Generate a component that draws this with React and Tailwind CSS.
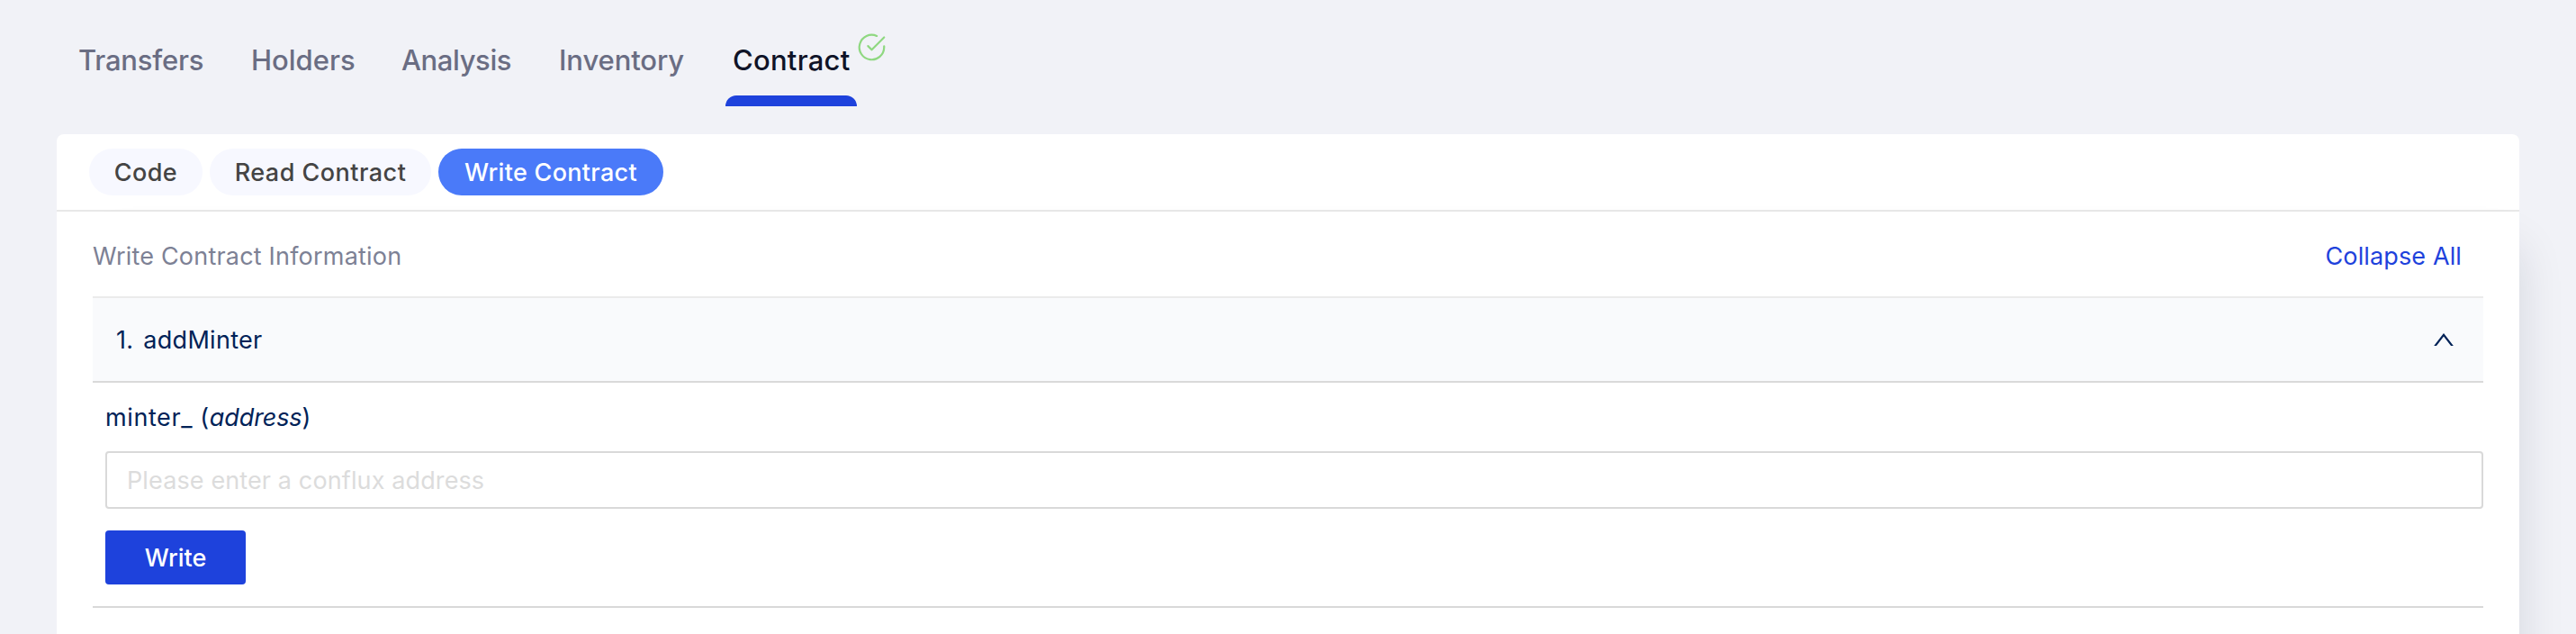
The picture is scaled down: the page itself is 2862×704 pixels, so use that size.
import React, { useState } from 'react';
import { FiCheckCircle } from 'react-icons/fi';
import clsx from 'clsx';

const tabs = [
    { name: 'Transfers', className: 'w-[156px] tracking-[-0.2px]' },
    { name: 'Holders', className: 'w-[131px]' },
    { name: 'Analysis', className: 'w-[139px] tracking-[-0.4px]' },
    { name: 'Inventory', className: 'w-[157px] tracking-[-0.1px]' },
    { name: 'Contract', className: 'w-[146px] tracking-[0.25px]', verified: true },
];

const views = [
    { name: 'Code', className: 'w-[126px] tracking-[0.4px]' },
    { name: 'Read Contract', className: 'w-[246px] tracking-[0.48px]' },
    { name: 'Write Contract', className: 'w-[250px] tracking-[0.3px]' },
];

const ChevronUp = ({ className }) => (
    <svg className={className} width="22" height="14" viewBox="0 0 22 14" fill="none">
        <polyline points="0.8,15 11,1.8 21.2,15" stroke="currentColor" strokeWidth="2.2" />
    </svg>
);

const App = () => {
    const [activeTab, setActiveTab] = useState('Contract');
    const [activeView, setActiveView] = useState('Write Contract');
    const [open, setOpen] = useState(true);

    return (
        <div className="h-[704px] overflow-hidden bg-[#f1f2f7] px-[63px] pt-[43px] font-['Inter',sans-serif] text-[27px]">
            {/* Tabs */}
            <div className="flex gap-9 pl-4">
                {tabs.map(tab => {
                    const active = tab.name === activeTab;
                    return (
                        <button
                            key={tab.name}
                            onClick={() => setActiveTab(tab.name)}
                            className={clsx(
                                'relative shrink-0 text-left whitespace-nowrap text-[31px] leading-[48px] font-medium',
                                active ? 'text-[#0f1327]' : 'text-[#6a6d83]',
                                tab.className
                            )}
                        >
                            <span className="block px-2 pb-[15px]">{tab.name}</span>
                            <span className={clsx('block h-3 rounded-t-[12px]', active && 'bg-[#1e42dc]')} />
                            {tab.verified && (
                                <FiCheckCircle
                                    size={33}
                                    strokeWidth={1.6}
                                    className="absolute left-[146px] -top-[7px] text-[#8fd881]"
                                />
                            )}
                        </button>
                    );
                })}
            </div>

            <div className="mt-[31px]">
                {/* Contract views */}
                <div className="flex gap-2 rounded-t-lg border-b-2 border-[#e8e8e8] bg-white px-9 py-4">
                    {views.map(view => (
                        <button
                            key={view.name}
                            onClick={() => setActiveView(view.name)}
                            className={clsx(
                                'h-[52px] rounded-full pt-0.5 font-medium whitespace-nowrap',
                                view.name === activeView ? 'bg-[#4a7af9] text-white' : 'bg-[#f7f8ff] text-[#444]',
                                view.className
                            )}
                        >
                            {view.name}
                        </button>
                    ))}
                </div>

                {/* Contract methods */}
                <div className="h-[560px] bg-white px-10 shadow-[24px_16px_48px_-24px_rgba(20,27,50,0.12)]">
                    <div className="flex h-[94px] items-center justify-between pt-1.5 pr-6">
                        <span className="tracking-[0.2px] text-[#7d8195]">Write Contract Information</span>
                        <button onClick={() => setOpen(!open)} className="tracking-[0.13px] text-[#1e42dc]">
                            Collapse All
                        </button>
                    </div>

                    <div className="border-t-2 border-b-2 border-t-[#ebebeb] border-b-[#d9d9d9] text-[#002257]">
                        <button
                            onClick={() => setOpen(!open)}
                            className="flex h-[94px] w-full items-center justify-between border-b-2 border-[#d9d9d9] bg-[#f9fafc] pr-[33px] pl-[26px]"
                        >
                            <span className="pt-0.5 tracking-[0.3px] [word-spacing:3px]">1. addMinter</span>
                            <ChevronUp />
                        </button>

                        {open && (
                            <div className="pt-[15px] pb-6 pl-[14px]">
                                <label className="block leading-[48px] tracking-[0.6px]">
                                    minter_ (<i className="tracking-[-0.1px]">address</i>)
                                </label>
                                <input
                                    className="mt-[13px] block h-16 w-full rounded border-2 border-[#d9d9d9] bg-white px-[22px] tracking-[0.12px] placeholder:text-[#dcdcdc]"
                                    placeholder="Please enter a conflux address"
                                />
                                <button className="mt-6 block h-[60px] w-[156px] rounded bg-[#1e42dc] pt-0.5 font-medium text-white">
                                    Write
                                </button>
                            </div>
                        )}
                    </div>
                </div>
            </div>
        </div>
    );
};

export default App;
